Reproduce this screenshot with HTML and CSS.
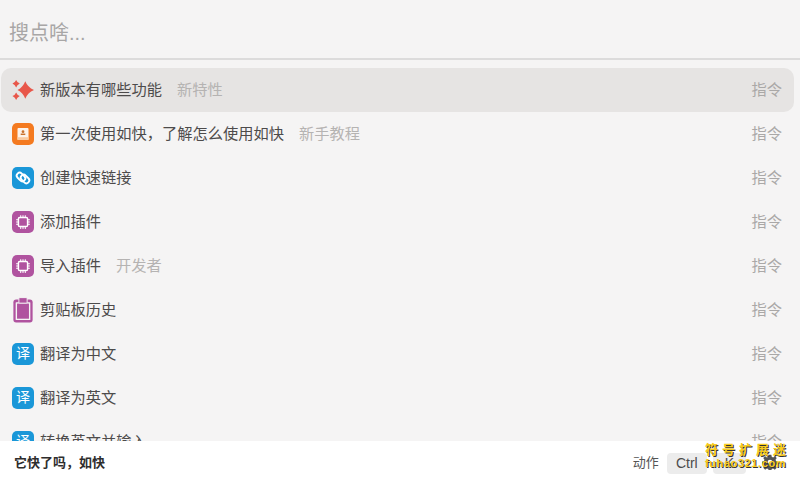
FILE: index.html
```html
<!DOCTYPE html>
<html lang="zh-CN">
<head>
    <meta charset="UTF-8">
    <title>搜点啥</title>
    <link rel="stylesheet" href="styles.css">
</head>
<body>

<div class="launcher">
    <!-- Search -->
    <div class="search-bar">
        <input class="search-input" type="text" placeholder="搜点啥...">
    </div>

    <!-- Command list -->
    <ul class="command-list">
        <li class="command active">
            <svg class="icon" viewBox="0 0 24 24"><path fill="#e8574a" d="M14.5 2.5 Q17 9 24 12 Q17 15 14.5 21.5 Q12 15 6 12 Q12 9 14.5 2.5Z M4.5 1 Q5.4 3.4 8.5 5 Q5.4 6.6 4.5 9.2 Q3.6 6.6 .5 5 Q3.6 3.4 4.5 1Z M4.5 14.6 Q5.4 17 8.5 18.6 Q5.4 20.2 4.5 22.8 Q3.6 20.2 .5 18.6 Q3.6 17 4.5 14.6Z"/></svg>
            <span class="command-name">新版本有哪些功能</span>
            <span class="command-tag">新特性</span>
            <span class="command-type">指令</span>
        </li>
        <li class="command">
            <svg class="icon" viewBox="0 0 24 24"><rect width="24" height="24" rx="5.5" fill="#f47a20"/><rect x="6" y="5.5" width="12" height="13" rx="1" fill="#fdf3ea"/><rect x="6" y="15.5" width="12" height="3" fill="#f9c9a0"/><circle cx="12" cy="9.5" r="1.5" fill="#c9712c"/><rect x="9.5" y="11.5" width="5" height="1.6" fill="#c9712c"/></svg>
            <span class="command-name">第一次使用如快，了解怎么使用如快</span>
            <span class="command-tag">新手教程</span>
            <span class="command-type">指令</span>
        </li>
        <li class="command">
            <svg class="icon" viewBox="0 0 24 24"><rect width="24" height="24" rx="5.5" fill="#1a97d8"/><g fill="none" stroke="#fff" stroke-width="2"><rect x="3.5" y="8.8" width="10.5" height="6.4" rx="3.2" transform="rotate(45 8.75 12) translate(0 -1.5)"/><rect x="10" y="8.8" width="10.5" height="6.4" rx="3.2" transform="rotate(45 15.25 12) translate(0 1.5)"/></g></svg>
            <span class="command-name">创建快速链接</span>
            <span class="command-type">指令</span>
        </li>
        <li class="command">
            <svg class="icon" viewBox="0 0 24 24"><use href="#chip"/></svg>
            <span class="command-name">添加插件</span>
            <span class="command-type">指令</span>
        </li>
        <li class="command">
            <svg class="icon" viewBox="0 0 24 24"><use href="#chip"/></svg>
            <span class="command-name">导入插件</span>
            <span class="command-tag">开发者</span>
            <span class="command-type">指令</span>
        </li>
        <li class="command">
            <svg class="icon icon-tall" viewBox="0 0 24 24"><rect x="1.5" y="0.5" width="21" height="25" rx="3" fill="#b0539f"/><rect x="4" y="3.5" width="16" height="19.5" rx="0.5" fill="#f5f4f4"/><rect x="5.5" y="5" width="13" height="16.5" fill="#b0539f"/><rect x="7.5" y="-1.5" width="9" height="6" rx="1" fill="#b0539f" stroke="#f5f4f4"/></svg>
            <span class="command-name">剪贴板历史</span>
            <span class="command-type">指令</span>
        </li>
        <li class="command">
            <span class="icon icon-text">译</span>
            <span class="command-name">翻译为中文</span>
            <span class="command-type">指令</span>
        </li>
        <li class="command">
            <span class="icon icon-text">译</span>
            <span class="command-name">翻译为英文</span>
            <span class="command-type">指令</span>
        </li>
        <li class="command">
            <span class="icon icon-text">译</span>
            <span class="command-name">转换英文并输入</span>
            <span class="command-type">指令</span>
        </li>
    </ul>

    <!-- Footer -->
    <div class="footer">
        <span class="footer-title">它快了吗，如快</span>
        <span class="footer-action">动作</span>
        <span class="key">Ctrl</span>
        <span class="key key-k">K</span>
        <svg class="gear" viewBox="0 0 24 24"><path fill="#555" fill-rule="evenodd" d="M10 1h4l.6 3.2 2 .9 2.7-1.8 2.8 2.8-1.8 2.7.9 2 3.2.6v4l-3.2.6-.9 2 1.8 2.7-2.8 2.8-2.7-1.8-2 .9-.6 3.2h-4l-.6-3.2-2-.9-2.7 1.8-2.8-2.8 1.8-2.7-.9-2-3.2-.6v-4l3.2-.6.9-2-1.8-2.7 2.8-2.8 2.7 1.8 2-.9zM12 8.5a3.5 3.5 0 1 0 0 7 3.5 3.5 0 0 0 0-7z"/></svg>
    </div>

    <!-- Watermark -->
    <div class="watermark">
        <div class="watermark-name">符号扩展迷</div>
        <div class="watermark-url">fuhao321.com</div>
    </div>
</div>

<!-- Shared chip icon -->
<svg class="defs" width="0" height="0">
    <defs>
        <g id="chip">
            <rect width="24" height="24" rx="5.5" fill="#b0539f"/>
            <rect x="7" y="7" width="10" height="10" rx="1.5" fill="none" stroke="#fff" stroke-width="1.6"/>
            <path stroke="#fff" stroke-width="1.1" d="M9.5 4.5v2.5M12 4.5v2.5M14.5 4.5v2.5M9.5 17v2.5M12 17v2.5M14.5 17v2.5M4.5 9.5h2.5M4.5 12h2.5M4.5 14.5h2.5M17 9.5h2.5M17 12h2.5M17 14.5h2.5"/>
        </g>
    </defs>
</svg>

</body>
</html>
```

FILE: styles.css
```css
/* General Styles */
body {
    margin: 0;
    font-family: "Liberation Sans", "Noto Sans CJK SC", sans-serif;
    background-color: #f5f4f4;
}

.launcher {
    position: relative;
    display: flex;
    flex-direction: column;
    height: 100vh;
    overflow: hidden;
}

/* Search */
.search-bar {
    flex: none;
    height: 50px;
    padding: 8px 9px 0;
    display: flex;
    align-items: center;
    border-bottom: 2px solid #dcdbdb;
}

.search-input {
    flex: 1;
    border: none;
    outline: none;
    padding: 0;
    background: transparent;
    font-family: inherit;
    font-size: 20px;
}

.search-input::placeholder {
    color: #a8a6a6;
}

/* Command list */
.command-list {
    flex: 1;
    min-height: 0;
    overflow: hidden;
    list-style: none;
    margin: 0;
    padding: 8px 6px 0 1px;
}

.command {
    display: flex;
    align-items: center;
    height: 44px;
    padding: 0 12px 0 11px;
    border-radius: 10px;
    font-size: 15.25px;
    color: #4d4b4b;
}

.command.active {
    background-color: #e6e4e3;
}

.command span:not(.icon) {
    padding-bottom: 5px;
}

.icon {
    flex: none;
    width: 22px;
    height: 22px;
    margin-right: 6px;
}

.icon-tall {
    overflow: visible;
}

.icon-text {
    background-color: #1a97d8;
    border-radius: 5px;
    color: #fff;
    font-size: 14px;
    line-height: 21px;
    text-align: center;
}

.command-tag {
    margin-left: 15px;
    color: #b5b3b2;
}

.command-type {
    margin-left: auto;
    color: #aaa8a7;
}

/* Footer */
.footer {
    flex: none;
    height: 33px;
    display: flex;
    align-items: center;
    padding: 4px 22px 0 14px;
    background-color: #fff;
    font-size: 13px;
    color: #555;
}

.footer-title {
    margin-right: auto;
    font-weight: 700;
    color: #2e2d2d;
}

.footer-action {
    margin-right: 8px;
}

.key {
    padding: 2px 9px;
    margin: 3px 6px 0 0;
    background-color: #ececec;
    border-radius: 4px;
    font-size: 14px;
    line-height: 17px;
    color: #4d4b4b;
}

.key-k {
    padding: 2px 12px;
    margin-right: 16px;
}

.gear {
    width: 16px;
    height: 16px;
}

/* Watermark */
.watermark {
    position: absolute;
    right: 13px;
    bottom: 8px;
    width: 82px;
    text-align: left;
    color: #f7cc1e;
    font-weight: 700;
    text-shadow: 1px 1px #333;
}

.watermark-name {
    font-size: 13px;
    line-height: 15px;
    letter-spacing: 4px;
    white-space: nowrap;
}

.watermark-url {
    font-size: 11px;
    line-height: 13px;
    letter-spacing: 0.6px;
    white-space: nowrap;
}

.defs {
    position: absolute;
}
```
